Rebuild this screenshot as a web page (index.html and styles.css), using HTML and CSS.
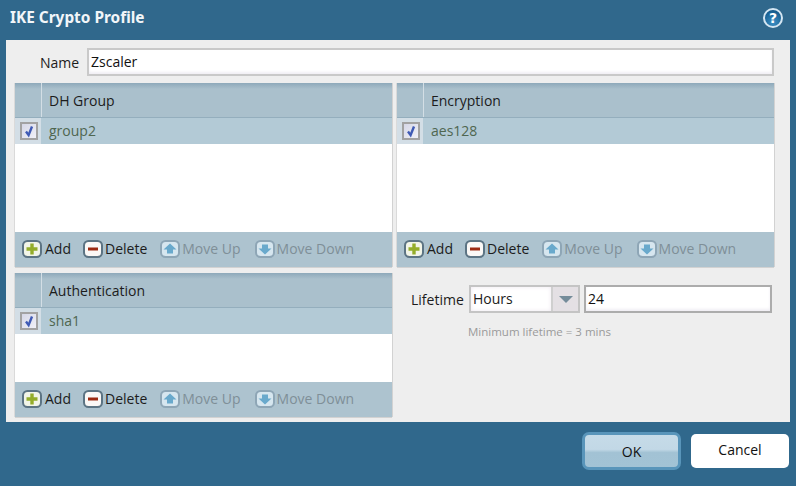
FILE: index.html
```html
<!DOCTYPE html>
<html lang="en">
<head>
    <meta charset="UTF-8">
    <title>IKE Crypto Profile</title>
    <link rel="stylesheet" href="styles.css">
</head>
<body>
<svg class="icon-defs" width="0" height="0">
    <defs>
        <radialGradient id="blue-ball" cx="0.5" cy="0.75" r="0.8">
            <stop offset="0" stop-color="#3c8fc4"/>
            <stop offset="1" stop-color="#0b4f80"/>
        </radialGradient>
        <linearGradient id="check-fill" x1="0" y1="0" x2="1" y2="1">
            <stop offset="0" stop-color="#d4d6e6"/>
            <stop offset="1" stop-color="#f2f2f8"/>
        </linearGradient>
        <symbol id="icon-add" viewBox="0 0 20 18">
            <rect x="1" y="1" width="18" height="16" rx="4.5" fill="#f2f5e8" stroke="#5c7484" stroke-width="2"/>
            <path d="M10 3.5v11M4.5 9h11" stroke="#94ad2a" stroke-width="3.4"/>
        </symbol>
        <symbol id="icon-delete" viewBox="0 0 20 18">
            <rect x="1" y="1" width="18" height="16" rx="4.5" fill="#fbf8f6" stroke="#5c7484" stroke-width="2"/>
            <path d="M5 9h10" stroke="#9c2a12" stroke-width="3"/>
        </symbol>
        <symbol id="icon-up" viewBox="0 0 20 18">
            <rect x="1" y="1" width="18" height="16" rx="4.5" fill="#d6e6ef" stroke="#8ea6b6" stroke-width="2"/>
            <path d="M10 3.5l6.5 6h-3.5v4h-6v-4h-3.5z" fill="#69a9cc"/>
        </symbol>
        <symbol id="icon-down" viewBox="0 0 20 18">
            <rect x="1" y="1" width="18" height="16" rx="4.5" fill="#d6e6ef" stroke="#8ea6b6" stroke-width="2"/>
            <path d="M10 14.5l6.5-6h-3.5v-4h-6v4h-3.5z" fill="#69a9cc"/>
        </symbol>
        <symbol id="icon-check" viewBox="0 0 18 18">
            <rect x="1" y="1" width="16" height="16" fill="url(#check-fill)" stroke="#a2a2a2" stroke-width="2"/>
            <path d="M6 9.5l2.6 3.6 3.4-8.6" fill="none" stroke="#3f5ab5" stroke-width="2.4"/>
        </symbol>
    </defs>
</svg>

<div class="dialog">
    <div class="title-bar">
        <span class="title">IKE Crypto Profile</span>
        <svg class="help" width="22" height="22" viewBox="0 0 22 22">
            <circle cx="11" cy="11" r="9" fill="url(#blue-ball)" stroke="#d4e6f2" stroke-width="2"/>
            <text x="11" y="16" text-anchor="middle" class="help-mark">?</text>
        </svg>
    </div>

    <div class="panel">
        <div class="name-row">
            <label class="name-label">Name</label>
            <div class="text-box name-box">Zscaler</div>
        </div>

        <div class="columns">
            <div class="grid-panel">
                <div class="grid-head">
                    <div class="head-check"></div>
                    <div class="head-text">DH Group</div>
                </div>
                <div class="grid-row">
                    <div class="row-check"><svg width="18" height="18"><use href="#icon-check"/></svg></div>
                    <div class="row-text">group2</div>
                </div>
                <div class="grid-body"></div>
                <div class="toolbar">
                    <span class="tool tool-add"><svg width="20" height="18"><use href="#icon-add"/></svg>Add</span>
                    <span class="tool tool-delete"><svg width="20" height="18"><use href="#icon-delete"/></svg>Delete</span>
                    <span class="tool tool-up off"><svg width="20" height="18"><use href="#icon-up"/></svg>Move Up</span>
                    <span class="tool off"><svg width="20" height="18"><use href="#icon-down"/></svg>Move Down</span>
                </div>
            </div>

            <div class="grid-panel">
                <div class="grid-head">
                    <div class="head-check"></div>
                    <div class="head-text">Encryption</div>
                </div>
                <div class="grid-row">
                    <div class="row-check"><svg width="18" height="18"><use href="#icon-check"/></svg></div>
                    <div class="row-text">aes128</div>
                </div>
                <div class="grid-body"></div>
                <div class="toolbar">
                    <span class="tool tool-add"><svg width="20" height="18"><use href="#icon-add"/></svg>Add</span>
                    <span class="tool tool-delete"><svg width="20" height="18"><use href="#icon-delete"/></svg>Delete</span>
                    <span class="tool tool-up off"><svg width="20" height="18"><use href="#icon-up"/></svg>Move Up</span>
                    <span class="tool off"><svg width="20" height="18"><use href="#icon-down"/></svg>Move Down</span>
                </div>
            </div>

            <div class="grid-panel">
                <div class="grid-head">
                    <div class="head-check"></div>
                    <div class="head-text">Authentication</div>
                </div>
                <div class="grid-row">
                    <div class="row-check"><svg width="18" height="18"><use href="#icon-check"/></svg></div>
                    <div class="row-text">sha1</div>
                </div>
                <div class="grid-body"></div>
                <div class="toolbar">
                    <span class="tool tool-add"><svg width="20" height="18"><use href="#icon-add"/></svg>Add</span>
                    <span class="tool tool-delete"><svg width="20" height="18"><use href="#icon-delete"/></svg>Delete</span>
                    <span class="tool tool-up off"><svg width="20" height="18"><use href="#icon-up"/></svg>Move Up</span>
                    <span class="tool off"><svg width="20" height="18"><use href="#icon-down"/></svg>Move Down</span>
                </div>
            </div>

            <div class="lifetime">
                <div class="lifetime-row">
                    <label class="lifetime-label">Lifetime</label>
                    <div class="combo">
                        <div class="combo-value">Hours</div>
                        <div class="combo-arrow"><div class="arrow-shape"></div></div>
                    </div>
                    <div class="text-box lifetime-box">24</div>
                </div>
                <div class="hint">Minimum lifetime = 3 mins</div>
            </div>
        </div>
    </div>

    <div class="footer">
        <div class="button button-ok">OK</div>
        <div class="button button-cancel">Cancel</div>
    </div>
</div>
</body>
</html>
```

FILE: styles.css
```css
* {
    box-sizing: border-box;
}

html, body {
    margin: 0;
    padding: 0;
}

body {
    font-family: "Open Sans", "Noto Sans", sans-serif;
    font-size: 14px;
    color: #1c1c1c;
    background-color: #30688c;
}

.icon-defs {
    display: block;
    height: 0;
}

.dialog {
    width: 796px;
    height: 486px;
    display: flex;
    flex-direction: column;
    background-color: #30688c;
}

.title-bar {
    height: 40px;
    display: flex;
    align-items: center;
    justify-content: space-between;
    padding: 0 12px 4px 10px;
}

.title {
    font-family: "Noto Sans", sans-serif;
    font-weight: bold;
    font-size: 15.4px;
    line-height: 18px;
    color: #f2f6f9;
}

.help-mark {
    font-family: "DejaVu Sans", sans-serif;
    font-weight: bold;
    font-size: 14px;
    fill: white;
}

.panel {
    margin-left: 6px;
    width: 784px;
    height: 382px;
    padding: 8px 0 0 9px;
    background-color: #eeeeee;
}

.name-row {
    display: flex;
    align-items: center;
    height: 28px;
}

.name-label {
    width: 72px;
    padding-left: 25px;
}

.text-box {
    height: 28px;
    line-height: 24px;
    padding-left: 2px;
    color: #111111;
    background-color: white;
    border: 2px solid #c9c9c9;
    box-shadow: inset 0 -2px 3px #f0eef4;
}

.name-box {
    width: 687px;
}

.columns {
    margin-top: 7px;
    display: grid;
    grid-template-columns: 377px 377px;
    grid-template-rows: 184px 144px;
    column-gap: 5px;
    row-gap: 6px;
}

.grid-panel {
    display: flex;
    flex-direction: column;
    background-color: white;
    box-shadow: 0 1px 0 #d2d2d2, 1px 0 0 #d2d2d2, -1px 0 0 #dadada;
}

.grid-head {
    height: 35px;
    display: flex;
    color: #1c1c1c;
    background: linear-gradient(#8ea9ba, #aac0cc 6px);
    border-bottom: 1px solid #94aebd;
}

.head-check {
    width: 27px;
    border-right: 1px solid #d3dee5;
}

.head-text {
    padding: 8px 0 0 7px;
}

.grid-row {
    height: 26px;
    display: flex;
    color: #4f6650;
    background-color: #b3cad6;
}

.row-check {
    width: 26px;
    padding: 4px 0 0 5px;
    background-color: #d3dee6;
}

.row-text {
    padding: 3px 0 0 8px;
}

.grid-body {
    flex: 1;
}

.toolbar {
    height: 35px;
    display: flex;
    align-items: center;
    padding: 0 0 2px 7px;
    background-color: #adc3cf;
}

.tool {
    display: flex;
    align-items: center;
    gap: 2px;
}

.tool-add {
    gap: 3px;
    margin-right: 12px;
}

.tool-delete {
    margin-right: 13px;
}

.tool-up {
    margin-right: 14px;
}

.off {
    color: #7f8f98;
}

.lifetime {
    padding: 12px 0 0 14px;
}

.lifetime-row {
    display: flex;
    align-items: center;
}

.lifetime-label {
    width: 58px;
}

.combo {
    width: 111px;
    height: 28px;
    display: flex;
    border: 2px solid #c4c4c4;
}

.combo-value {
    flex: 1;
    padding-left: 2px;
    line-height: 24px;
    background-color: white;
    box-shadow: inset 0 0 4px #eee8f0;
}

.combo-arrow {
    width: 27px;
    display: flex;
    align-items: center;
    justify-content: center;
    background-color: #e4e0e4;
    border-left: 2px solid #cfcfcf;
}

.arrow-shape {
    width: 0;
    height: 0;
    border-left: 7px solid transparent;
    border-right: 7px solid transparent;
    border-top: 7px solid #758c9a;
}

.lifetime-box {
    width: 188px;
    margin-left: 4px;
    border-color: #acacac;
}

.hint {
    margin: 11px 0 0 57px;
    font-size: 11.5px;
    color: #9a9a9a;
}

.footer {
    flex: 1;
    display: flex;
    align-items: center;
    justify-content: flex-end;
    padding: 0 7px 6px 0;
    gap: 10px;
}

.button {
    width: 98px;
    height: 34px;
    line-height: 31px;
    text-align: center;
    color: #111111;
    border-radius: 5px;
    background-color: white;
}

.button-ok {
    width: 99px;
    height: 38px;
    line-height: 33px;
    border: 3px solid #5995ba;
    border-radius: 7px;
    background: linear-gradient(#c6dbe8, #c2d8e6 45%, #a2c2d4 55%, #a3c3d5);
}
```
